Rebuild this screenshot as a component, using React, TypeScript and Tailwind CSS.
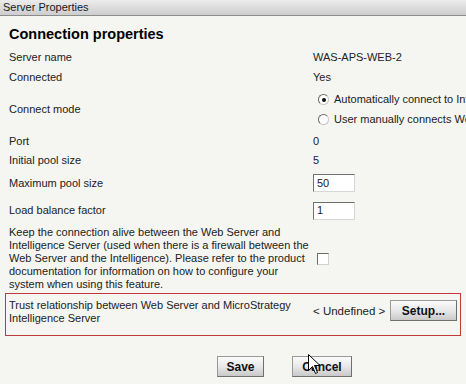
import React from "react"

const FONT = { fontFamily: '"Liberation Sans", Arial, sans-serif' }

function Btn({ label, className }: { label: string; className: string }) {
  return (
    <button
      className={`flex items-center justify-center border border-[#9a9a9a] border-b-[#6e6e6e] border-r-[#6e6e6e] bg-gradient-to-b from-[#fbfbfb] via-[#e8e8e8] to-[#c9c9c9] text-[12px] font-bold text-[#111] ${className}`}
    >
      {label}
    </button>
  )
}

function Radio({ checked, label }: { checked?: boolean; label: string }) {
  return (
    <div className="flex h-[20px] items-center gap-[5px] pl-[5px]">
      <span className="flex h-[11px] w-[11px] items-center justify-center rounded-full border border-[#6b6b6b] border-b-[#c8c8c8] border-r-[#c8c8c8] bg-white">
        {checked && <span className="h-[4px] w-[4px] rounded-full bg-[#111]" />}
      </span>
      <span>{label}</span>
    </div>
  )
}

function Field({ value }: { value: string }) {
  return (
    <div className="flex h-[18px] w-[42px] items-center border border-[#d6d6d6] border-l-[#707070] border-t-[#707070] bg-white pl-[3px]">
      {value}
    </div>
  )
}

export default function App() {
  return (
    <div
      style={FONT}
      className="relative h-[384px] w-[466px] overflow-hidden whitespace-nowrap bg-[#f5f5f1] text-[11px] text-[#222]"
    >
      <div className="flex h-[16px] items-center border-b border-[#8c8c8c] bg-gradient-to-b from-[#ececec] to-[#cdcdcd] pl-[3px] text-[11px] text-[#1a1a1a]">
        Server Properties
      </div>

      <div className="px-[9px]">
        <div className="flex h-[32px] items-end pb-[2px] text-[14.5px] font-bold text-black">
          Connection properties
        </div>

        <div className="grid grid-cols-[304px_1fr]">
          <div className="flex h-[19px] items-center">Server name</div>
          <div className="flex h-[19px] items-center">WAS-APS-WEB-2</div>

          <div className="flex h-[20px] items-center">Connected</div>
          <div className="flex h-[20px] items-center">Yes</div>

          <div className="flex h-[45px] items-center">Connect mode</div>
          <div className="flex h-[45px] flex-col justify-center">
            <Radio checked label="Automatically connect to Intelligence Server when Web Server starts" />
            <Radio label="User manually connects Web Server to Intelligence Server" />
          </div>

          <div className="flex h-[19px] items-center">Port</div>
          <div className="flex h-[19px] items-center">0</div>

          <div className="flex h-[19px] items-center">Initial pool size</div>
          <div className="flex h-[19px] items-center">5</div>

          <div className="flex h-[26px] items-center">Maximum pool size</div>
          <div className="flex h-[26px] items-center">
            <Field value="50" />
          </div>

          <div className="flex h-[29px] items-center">Load balance factor</div>
          <div className="flex h-[29px] items-center">
            <Field value="1" />
          </div>

          <div className="py-px leading-[13px]">
            Keep the connection alive between the Web Server and
            <br />
            Intelligence Server (used when there is a firewall between the
            <br />
            Web Server and the Intelligence). Please refer to the product
            <br />
            documentation for information on how to configure your
            <br />
            system when using this feature.
          </div>
          <div className="flex items-center pl-[4px]">
            <span className="h-[12px] w-[12px] border border-[#6b6b6b] border-b-[#cfcfcf] border-r-[#cfcfcf] bg-white" />
          </div>
        </div>
      </div>

      <div className="mx-[5px] mt-[1px] grid h-[43px] grid-cols-[304px_77px_67px] items-start border border-[#c0393b] pl-[3px] pt-[5px]">
        <div className="leading-[13px]">
          Trust relationship between Web Server and MicroStrategy
          <br />
          Intelligence Server
        </div>
        <div className="mt-[4px] text-[11.5px]">&lt; Undefined &gt;</div>
        <div className="pt-[1px]">
          <Btn label="Setup..." className="h-[21px] w-[67px]" />
        </div>
      </div>

      <div className="mt-[20px] flex gap-[28px] pl-[217px]">
        <Btn label="Save" className="h-[21px] w-[47px]" />
        <Btn label="Cancel" className="h-[21px] w-[60px]" />
      </div>

      <svg
        className="absolute left-[308px] top-[354px]"
        width="13"
        height="21"
        viewBox="0 0 13 21"
      >
        <path
          d="M0.5 0.5 L0.5 16.5 L4.5 12.5 L7.5 19.5 L9.5 18.5 L6.5 11.5 L12 11.5 Z"
          fill="white"
          stroke="black"
          strokeWidth="1"
          strokeLinejoin="miter"
        />
      </svg>
    </div>
  )
}
